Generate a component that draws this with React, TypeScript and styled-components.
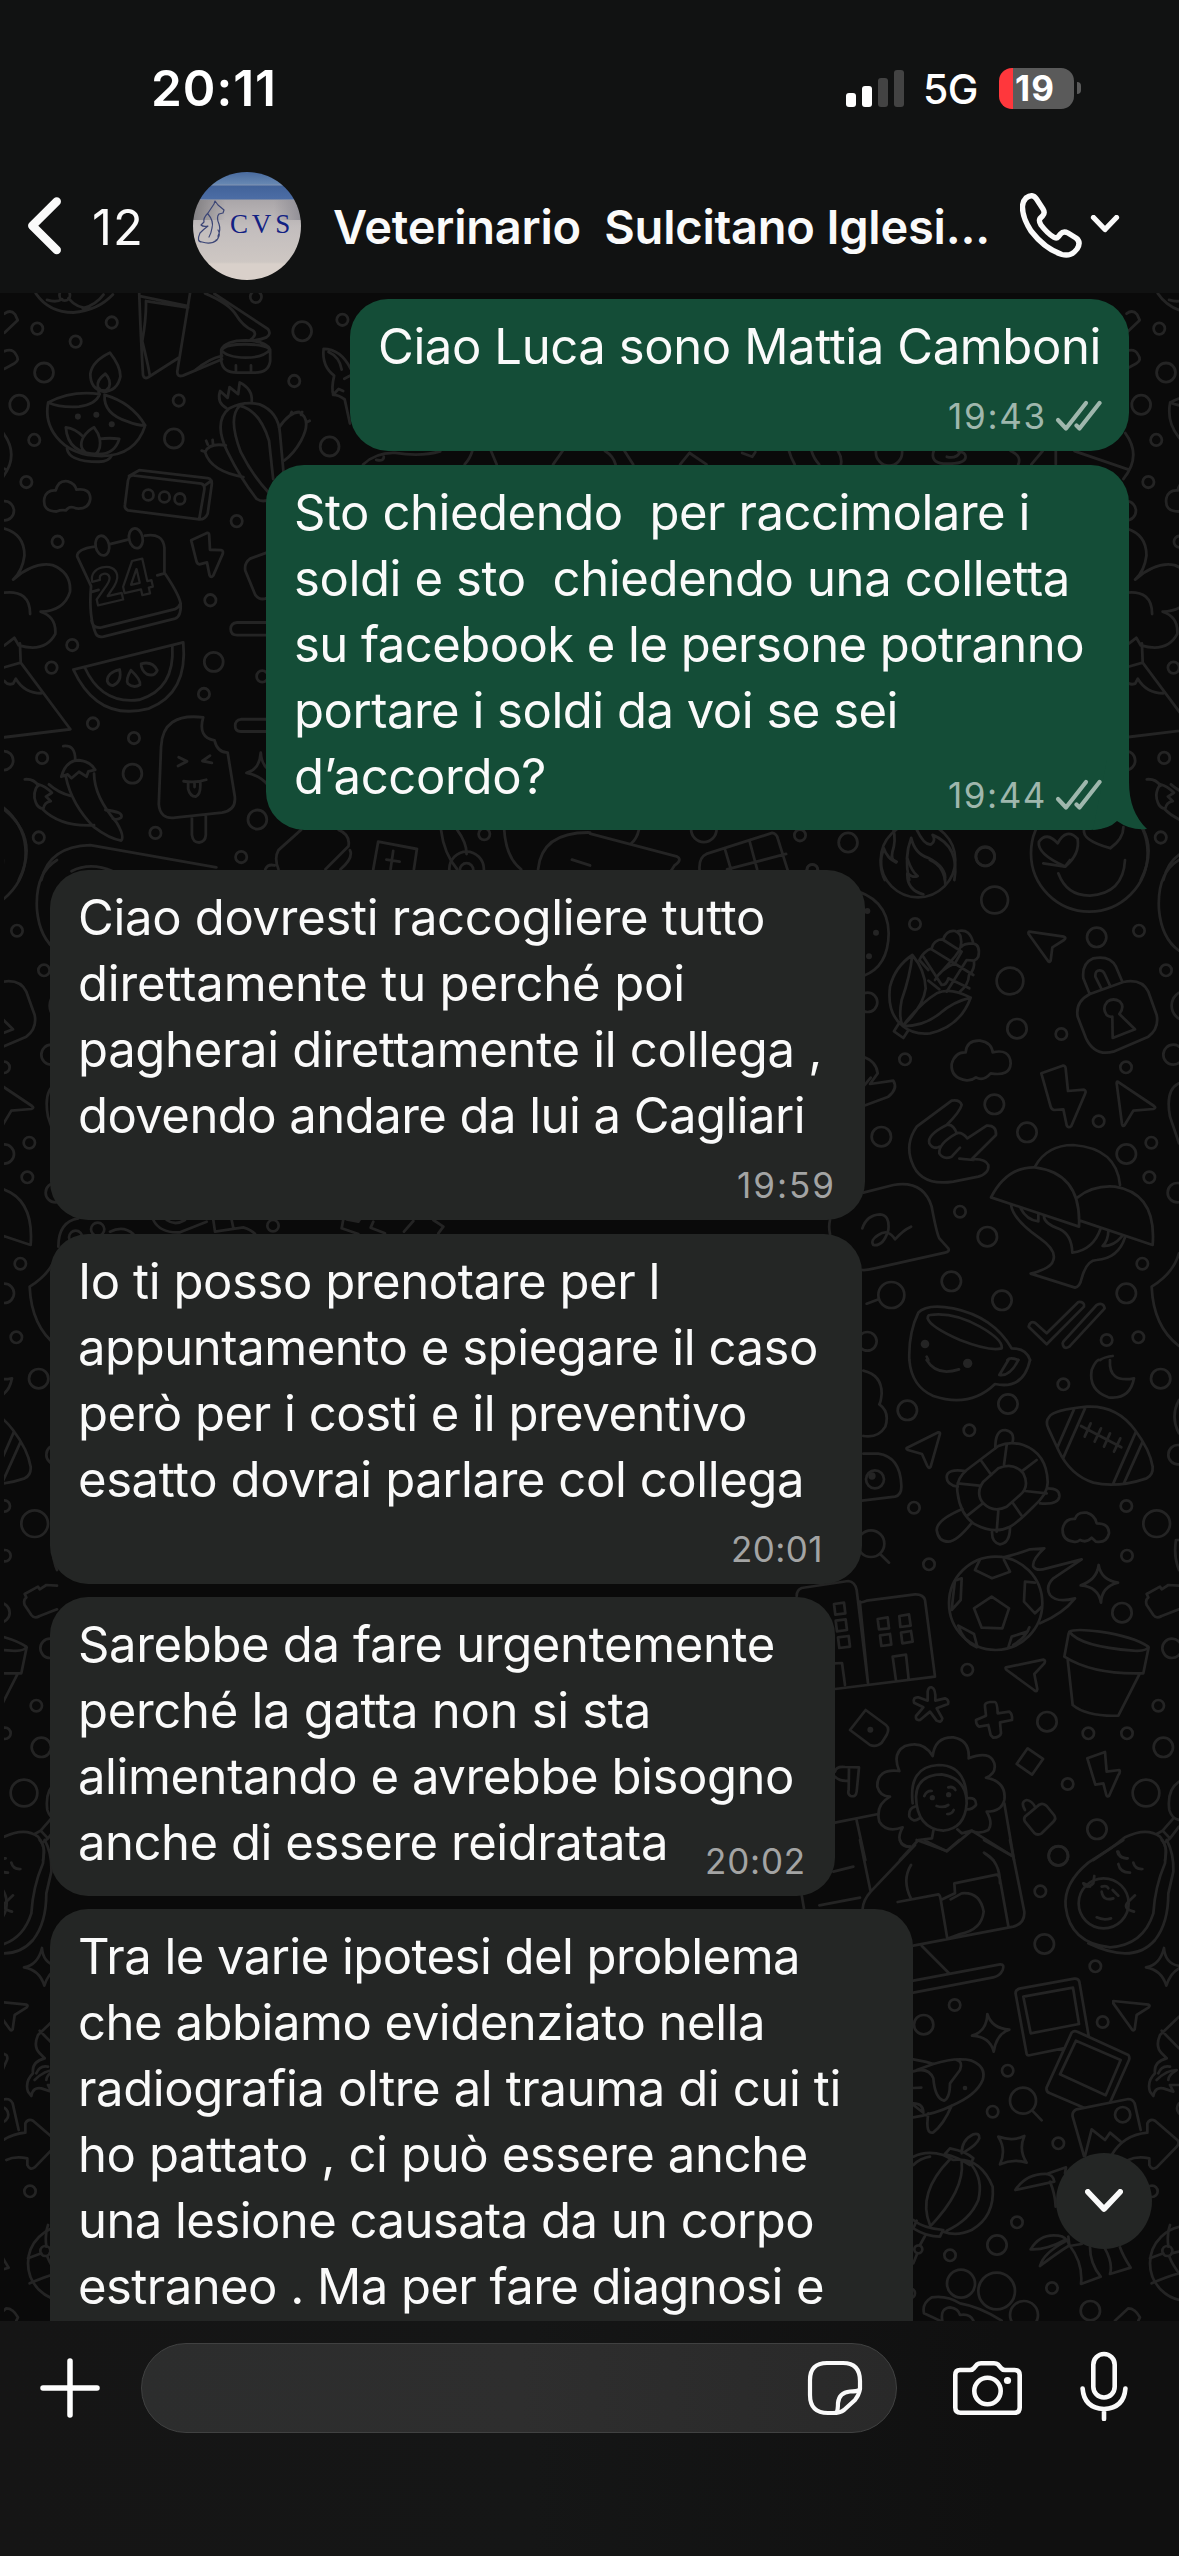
import React, { useLayoutEffect, useRef, useState } from "react";
import styled, { createGlobalStyle } from "styled-components";

const GlobalStyle = createGlobalStyle`
  html, body { margin: 0; padding: 0; background: #0a0a0a; }
  * { box-sizing: border-box; }
`;

const Screen = styled.div`
  width: 1179px;
  height: 2556px;
  display: flex;
  flex-direction: column;
  overflow: hidden;
  background: #0a0a0a;
  color: #fafafa;
  font-family: Inter, "Liberation Sans", sans-serif;
  font-size: 49px;
`;

/* ---------- text that is tracked to fill a given measure ---------- */

const Tracked = styled.span`
  display: inline-block;
  white-space: pre;
`;

function FitText({ width, children }: { width: number; children: string }) {
  const ref = useRef<HTMLSpanElement>(null);
  const [spacing, setSpacing] = useState(0);
  useLayoutEffect(() => {
    const el = ref.current;
    if (!el) return;
    el.style.letterSpacing = "0px";
    const natural = el.getBoundingClientRect().width;
    setSpacing((width - natural) / children.length);
  }, [width, children]);
  return (
    <Tracked ref={ref} style={{ letterSpacing: `${spacing}px` }}>
      {children}
    </Tracked>
  );
}

/* ---------- header ---------- */

const Header = styled.header`
  flex: none;
  height: 293px;
  padding-top: 58px;
  background: #111212;
`;

const StatusRow = styled.div`
  height: 60px;
  padding: 0 98px 0 151px;
  display: flex;
  align-items: center;
  color: #fff;
`;

const Clock = styled.div`
  font-size: 49.5px;
  line-height: 60px;
  font-weight: 600;
  flex: 1;
`;

const SignalBars = styled.div`
  display: flex;
  align-items: flex-end;
  gap: 6px;
  height: 37px;
  margin-right: 19px;
`;

const Bar = styled.i<{ $h: number; $on?: boolean }>`
  width: 10px;
  height: ${(p) => p.$h}px;
  border-radius: 3px;
  background: ${(p) => (p.$on ? "#fff" : "#434343")};
`;

const Network = styled.div`
  font-size: 41px;
  line-height: 50px;
  font-weight: 500;
  width: 76px;
  padding-top: 2px;
`;

const Battery = styled.div`
  width: 75px;
  height: 41px;
  border-radius: 13px;
  background: linear-gradient(90deg, #ff373c 14px, #5a5a5a 14px);
  font-size: 35px;
  line-height: 41px;
  font-weight: 700;
  padding-left: 16px;
`;

const BatteryCap = styled.i`
  width: 4px;
  height: 12px;
  margin-left: 3px;
  border-radius: 0 5px 5px 0;
  background: #5a5a5a;
`;

const NavRow = styled.div`
  margin-top: 54px;
  height: 108px;
  padding-left: 27px;
  display: flex;
  align-items: center;
`;

const Unread = styled.div`
  font-size: 49px;
  width: 101px;
  margin-left: 30px;
  padding-top: 2px;
`;

const Avatar = styled.div`
  width: 108px;
  height: 108px;
  flex: none;
  border-radius: 50%;
  overflow: hidden;
  display: flex;
  background:
    linear-gradient(#496b9f 0, #6687b2 12px, #8193b1 13px, #42639a 14px, #4c6da5 27px, transparent 28px),
    linear-gradient(90deg, #817f82 0, transparent 30%, transparent 75%, #918f96 100%) 0 28px / 100% 20px no-repeat,
    linear-gradient(#a9a5a8 27px, #c2bdbd 55px, #cec7c3 90px, #d9d0ca 92px);
`;

const AvatarMark = styled.svg`
  width: 34px;
  height: 108px;
  flex: none;
`;

const AvatarText = styled.span`
  font-family: "Liberation Serif", serif;
  font-size: 27px;
  line-height: 31px;
  margin-top: 37px;
  margin-left: 3px;
  color: #122183;
`;

const ContactName = styled.h1`
  margin: 0;
  padding-left: 32px;
  width: 719px;
  font-size: 47px;
  font-weight: 600;
`;

/* ---------- conversation ---------- */

const Conversation = styled.main`
  position: relative;
  height: 2028px;
  flex: none;
  overflow: hidden;
  background: #0a0a0a;
`;

const Wallpaper = styled.svg`
  position: absolute;
  left: 0;
  top: 0;
`;

const Thread = styled.div`
  position: relative;
  padding: 6px 50px 0;
  display: flex;
  flex-direction: column;
`;

const Bubble = styled.div<{ $mine?: boolean; $w: number; $gap: number; $open?: boolean }>`
  position: relative;
  flex: none;
  align-self: ${(p) => (p.$mine ? "flex-end" : "flex-start")};
  width: ${(p) => p.$w}px;
  margin-bottom: ${(p) => p.$gap}px;
  padding: 15px 31px ${(p) => (p.$open ? 80 : 17)}px 28px;
  border-radius: 38px;
  background: ${(p) => (p.$mine ? "#144d37" : "#242625")};
  display: flex;
  flex-direction: column;
`;

const Line = styled.div`
  height: 66px;
  line-height: 66px;
  white-space: pre;
`;

const Meta = styled.div<{ $inline?: boolean; $mine?: boolean }>`
  align-self: flex-end;
  display: flex;
  align-items: center;
  gap: ${(p) => (p.$mine ? 8 : 0)}px;
  height: 36px;
  line-height: 36px;
  margin-top: ${(p) => (p.$inline ? -33 : 18)}px;
  margin-right: ${(p) => (p.$mine ? -4 : -2)}px;
  font-size: 35px;
  color: ${(p) => (p.$mine ? "#9fb7ad" : "#a3a4a4")};
`;

const Tail = styled.svg`
  position: absolute;
  right: -18px;
  bottom: 0;
`;

const ScrollDown = styled.button`
  position: absolute;
  left: 1056px;
  top: 1860px;
  width: 96px;
  height: 96px;
  padding: 0;
  border: 0;
  border-radius: 50%;
  background: #242625;
  display: grid;
  place-items: center;
`;

/* ---------- composer ---------- */

const Composer = styled.footer`
  flex: 1;
  padding: 22px 50px 0 40px;
  display: flex;
  align-items: flex-start;
  background: linear-gradient(90deg, #151515, #151616 45%, #101010 85%);
`;

const ComposerIcon = styled.svg<{ $top: number; $left?: number }>`
  flex: none;
  margin-top: ${(p) => p.$top}px;
  margin-left: ${(p) => p.$left ?? 0}px;
`;

const Field = styled.div`
  width: 756px;
  height: 90px;
  margin-left: 41px;
  border: 1px solid #404141;
  border-radius: 45px;
  background: linear-gradient(90deg, #2c2d2d, #2e2e2e 50%, #292929);
  display: flex;
  align-items: center;
  justify-content: flex-end;
  padding-right: 33px;
`;

/* ---------- data ---------- */

type Message = {
  mine?: boolean;
  width: number;
  gap: number;
  lines: [string, number][];
  time?: string;
  timeWidth?: number;
  inline?: boolean;
  tail?: boolean;
};

const MESSAGES: Message[] = [
  {
    mine: true, width: 779, gap: 14, time: "19:43", timeWidth: 99,
    lines: [["Ciao Luca sono Mattia Camboni", 723]],
  },
  {
    mine: true, width: 863, gap: 40, time: "19:44", timeWidth: 99, inline: true, tail: true,
    lines: [
      ["Sto chiedendo  per raccimolare i", 736],
      ["soldi e sto  chiedendo una colletta", 776],
      ["su facebook e le persone potranno", 790],
      ["portare i soldi da voi se sei", 604],
      ["d’accordo?", 252],
    ],
  },
  {
    width: 815, gap: 14, time: "19:59", timeWidth: 99,
    lines: [
      ["Ciao dovresti raccogliere tutto", 687],
      ["direttamente tu perché poi", 607],
      ["pagherai direttamente il collega ,", 744],
      ["dovendo andare da lui a Cagliari", 727],
    ],
  },
  {
    width: 812, gap: 13, time: "20:01 ", timeWidth: 102,
    lines: [
      ["Io ti posso prenotare per l", 582],
      ["appuntamento e spiegare il caso", 740],
      ["però per i costi e il preventivo", 669],
      ["esatto dovrai parlare col collega", 726],
    ],
  },
  {
    width: 785, gap: 13, time: "20:02", timeWidth: 101, inline: true,
    lines: [
      ["Sarebbe da fare urgentemente", 697],
      ["perché la gatta non si sta", 573],
      ["alimentando e avrebbe bisogno", 716],
      ["anche di essere reidratata", 590],
    ],
  },
  {
    width: 863, gap: 0,
    lines: [
      ["Tra le varie ipotesi del problema", 722],
      ["che abbiamo evidenziato nella", 687],
      ["radiografia oltre al trauma di cui ti", 763],
      ["ho pattato , ci può essere anche", 730],
      ["una lesione causata da un corpo", 736],
      ["estraneo . Ma per fare diagnosi e", 746],
    ],
  },
];

/* ---------- wallpaper drawing ---------- */

type Dot = [number, number, number];

const Dots = ({ items }: { items: Dot[] }) => (
  <>
    {items.map(([x, y, r], i) => (
      <circle key={i} cx={x} cy={y} r={r} />
    ))}
  </>
);

const Paths = ({ items }: { items: string[] }) => (
  <>
    {items.map((d, i) => (
      <path key={i} d={d} />
    ))}
  </>
);

const LEFT_DOTS: Dot[] = [
  [99,127,15],[297,111,15],[201,161,15],[680,44,15],[910,104,15],[782,264,15],[475,315,15],[91,418,15],
  [70,528,15],[629,630,15],[153,684,15],[559,837,15],[192,954,15],[137,1013,15],[542,1082,15],[247,1159,15],
  [356,1197,15],[112,1249,15],[413,1445,15],[103,1457,15],[641,1508,15],[697,1036,15],
  [803,134,25],[117,242,25],[51,326,25],[462,414,25],[876,435,25],[568,998,25],[352,1290,25],[684,1410,25],
  [12,603,25],[10,1256,25],[394,562,14],[437,567,14],[478,572,14],[172,40,14],[1287,1448,15],[1240,1540,46],[1240,1542,18],
];

const LEFT_PATHS = [
  "M95,35Q130,85 195,85Q260,80 300,38M125,52Q150,60 165,50M182,48Q205,75 240,74M220,74Q255,65 275,38",
  "M12,88Q28,76 40,90L47,105L12,138M12,186Q33,178 42,194Q54,210 38,218L12,232",
  "M370,35Q374,150 380,248Q383,260 394,254L475,203M505,35L471,240Q471,254 486,250L590,207M388,55Q389,100 378,160Q392,215 398,248M388,55L500,72M372,42L500,68",
  "M545,35Q610,62 628,92Q645,120 672,132Q686,142 664,158M570,36L712,128Q722,140 708,150Q690,158 665,158M520,235Q555,205 590,198",
  "M588,182Q600,158 653,158Q710,160 718,182Q700,203 653,203Q600,202 588,182ZM588,182V212Q592,242 630,242H678Q714,242 718,212V182M590,182Q600,168 653,168Q700,168 716,180M627,223V240M667,223V240",
  "M292,190Q320,225 320,252Q312,290 275,292Q240,285 240,245Q245,212 292,190ZM280,245Q296,262 290,280Q275,300 260,280Q256,262 280,245Z",
  "M265,298Q190,288 128,320Q118,370 150,410Q190,460 270,460Q360,460 386,380Q350,320 278,300M265,298Q255,325 210,331Q160,334 128,320M278,300Q274,350 340,370Q365,380 386,380M262,292Q272,285 282,292",
  "M175,385Q200,388 222,410Q235,392 250,385Q262,400 265,415Q290,412 317,415Q305,455 262,455Q180,455 175,385M222,410Q205,440 235,455M265,415Q270,440 255,455M178,440Q182,475 262,475Q290,475 297,458",
  "M602,335Q575,320 585,290L605,308L610,280L633,298L637,268Q672,285 669,318",
  "M722,570Q700,584 682,572Q640,520 605,450Q565,370 610,335Q650,315 690,325Q740,345 744,400L755,520M636,330Q605,360 640,450Q670,510 718,560M636,328Q690,340 715,420L726,520",
  "M742,385Q770,345 795,345Q830,365 800,420Q780,455 755,472M647,515Q560,500 545,450Q555,425 600,432M775,345L772,352M803,345L800,352M823,368L815,372M536,446L546,449M548,420L552,430M565,418L566,428",
  "M150,605Q112,605 118,570Q124,548 148,550Q155,522 180,526Q200,532 203,548Q240,543 240,572Q236,600 203,597Q185,588 175,602Q162,600 150,605Z",
  "M343,512L370,497L552,518Q566,520 562,540L552,610Q545,628 525,625L340,602Q330,598 332,588L340,525Q342,508 358,511L535,532Q545,535 543,548L530,622M543,538L562,524",
  "M252,697Q205,703 205,722L242,800Q235,880 255,925Q260,935 275,932L465,885Q482,880 480,845Q475,820 437,765V700Q433,660 385,668M292,690L343,678M243,890Q247,912 270,908L465,860Q476,856 480,845M244,815L262,810M418,772L437,767",
  "M508,680L550,661Q556,660 556,668L558,705L588,706Q596,708 590,720L567,772Q561,780 557,772L550,738L530,743Q524,742 522,735Z",
  "M195,1018L487,947Q500,1080 395,1120Q260,1155 195,1018ZM225,1012Q270,1110 370,1097Q465,1070 458,957M285,1048Q285,1025 318,1018Q325,1050 300,1060Q288,1058 285,1048M348,1020Q375,1045 372,1058Q355,1068 340,1055Q333,1045 348,1020M375,1003Q405,995 418,1020Q410,1038 390,1030Q375,1020 375,1003",
  "M540,1143Q432,1130 428,1220L422,1370Q425,1410 465,1405L590,1392Q628,1385 624,1350L605,1235Q578,1235 570,1203Q525,1195 540,1143ZM510,1403V1450Q513,1470 529,1470Q546,1468 547,1450V1400M475,1247L497,1258L473,1270M558,1243L538,1257L563,1262M488,1310Q520,1315 548,1306M500,1312V1330Q505,1350 520,1350Q535,1345 532,1310M517,1315V1325",
  "M12,650Q65,665 65,720Q60,760 35,783Q90,735 140,745Q190,765 186,815Q170,865 108,867Q150,880 147,925Q120,975 50,955L38,935L12,955M12,817Q80,810 80,873M53,950L55,1000L187,1174L12,1195M12,1012L55,1000M12,1048Q20,1060 35,1055L42,1042Q65,1080 110,1080",
  "M168,1218Q200,1213 200,1255M163,1298Q175,1255 210,1255Q240,1258 253,1280L235,1284L230,1298L210,1285L190,1302L180,1292ZM175,1298Q190,1370 250,1430Q290,1460 322,1465Q332,1455 310,1418Q250,1350 250,1290",
  "M66,1305Q90,1303 102,1322M102,1318Q85,1340 95,1365Q100,1380 115,1382Q118,1365 135,1362L122,1350L138,1340Q120,1322 102,1318M112,1382Q160,1430 250,1425M130,1318Q155,1340 188,1348M280,1385Q330,1390 322,1405Q312,1412 300,1408",
  "M12,1385Q105,1460 50,1568M110,1568Q130,1480 240,1477L575,1535M190,1545Q240,1520 300,1545",
  "M707,713L665,728Q648,740 652,760L678,822Q690,838 707,832M720,895H630Q613,897 613,912Q613,928 630,928H720M720,1148H640Q625,1150 625,1165Q625,1180 640,1180H720M712,1278Q695,1265 693,1235Q690,1280 655,1288Q692,1295 712,1320",
  "M930,375L916,312Q900,300 886,300Q880,285 888,250Q855,225 860,180Q905,180 932,232M873,188Q902,200 908,234M885,300L900,285L912,290M915,258L930,250",
  "M965,482Q1000,450 1050,452Q1120,462 1170,448M1000,470Q1020,475 1020,462M1255,447Q1250,465 1235,482M1305,447L1320,482M1495,447L1470,482",
  "M800,1437L740,1490Q728,1510 740,1540M900,1437Q932,1450 926,1480L865,1540M930,1490Q940,1510 905,1540M705,1540Q712,1525 730,1530M1005,1468L1108,1487L1100,1540M1005,1468L992,1540M1045,1492L1038,1540M1027,1515L1062,1520M1172,1437Q1180,1500 1215,1540M1215,1437Q1240,1470 1240,1500M1340,1437Q1345,1510 1385,1540M1430,1540Q1440,1442 1568,1444M1520,1515L1568,1530",
];

const MID_PATHS = [
  "M40,447Q62,460 68,482M92,447L115,482M265,452L240,482M265,452L310,482M405,452L432,462L440,450M530,447Q535,465 545,482M590,447Q595,465 610,482M660,447Q672,465 668,482M915,447Q905,475 940,480Q1000,482 1000,462Q1000,450 980,447M950,462Q975,468 985,450M1120,447Q1150,460 1140,482M1205,447L1175,482M1240,447V482M1290,447L1432,495M1425,400Q1470,460 1420,520",
  "M0,1447L230,1506Q248,1514 225,1530L215,1545M130,1437Q125,1460 110,1472M292,1545Q288,1510 310,1500L485,1445Q497,1447 500,1460L527,1545M360,1490L375,1540M425,1467L445,1540M365,1540L522,1500",
  "M808,1437Q815,1465 805,1495Q800,1515 815,1522Q790,1510 782,1485Q765,1530 785,1568M850,1568Q835,1510 855,1458Q865,1500 900,1510Q950,1535 945,1568M870,1437Q890,1478 908,1475Q922,1465 912,1450Q985,1480 970,1568",
  "M1265,1533Q1190,1500 1195,1468Q1215,1440 1245,1472Q1268,1430 1298,1460Q1305,1500 1265,1533ZM1385,1485Q1310,1465 1315,1437M1385,1485Q1420,1460 1420,1430",
];

const R1_DOTS: Dot[] = [
  [644,120,40],[405,192,17],[950,232,29],[1077,212,17],[1158,331,17],[690,363,40],[711,506,29],[844,522,17],
  [375,598,17],[1038,622,17],[1180,584,30],[643,733,29],[741,817,29],[956,784,17],[1114,848,17],[304,830,29],
  [1039,882,29],[1108,952,17],[1192,998,29],[540,1055,17],[622,1130,29],[1087,1211,17],[514,1264,29],[666,1321,29],
  [1039,1300,29],[334,1305,39],[980,1440,17],[1075,1432,17],[263,427,29],[262,1444,28],[928,-20,175],[414,0,112],[616,-10,28],
  [97,30,17],[1220,437,45],
];
const R1_PATHS = [
  "M835,40Q860,108 930,107Q1030,100 1035,0M330,-5L350,5M382,-5Q395,35 413,48Q400,55 382,40Q380,90 430,103M450,0Q495,20 496,75M790,10L855,20L870,0M200,85Q325,110 326,220Q325,320 250,348",
  "M397,285Q435,330 437,385Q430,440 368,498Q320,460 330,380Q345,320 397,285ZM397,285Q390,350 365,420Q355,470 368,498M368,498Q420,430 470,400Q510,380 572,413Q540,500 450,520Q400,525 368,498ZM572,413Q520,425 480,460Q430,500 368,498M357,490L342,514L370,534L384,512",
  "M418,300Q430,275 455,265Q460,240 490,237Q500,210 525,213Q540,220 542,230M535,213Q570,205 580,250Q602,255 595,290Q590,300 582,302Q585,330 567,345Q565,375 540,395M418,300L445,330M445,362L478,388M430,290L485,375Q500,375 505,355L568,385M455,268L580,345M490,240L545,275L525,310Q480,330 465,360M542,232Q550,260 525,290L480,340M545,260Q550,250 580,250M582,302L560,300L500,395",
  "M748,215L852,230Q860,233 852,240L817,262L812,302Q808,310 802,300L746,222Q744,216 748,215ZM1013,665L1122,738Q1130,744 1120,747L1060,752L1034,795Q1028,802 1026,792L1010,670Q1010,664 1013,665Z",
  "M929,402L910,355Q905,310 940,295Q990,285 1008,320L1026,363M965,388L946,350Q945,330 960,331Q970,332 974,342L990,377M930,402L1030,366Q1085,355 1105,395L1130,465Q1138,505 1105,530L1000,575Q945,590 918,535L893,470Q885,425 930,402ZM997,470L998,534L1065,508L1018,462Q1035,440 1020,425Q1000,412 982,425Q965,445 980,465Q988,472 997,470",
  "M560,661Q512,655 515,612Q525,575 557,577Q560,540 600,542Q635,548 638,577Q690,565 692,610Q690,650 632,640Q610,665 588,652Q575,662 560,661Z",
  "M784,640L848,617Q856,616 857,625L864,693L912,689Q920,692 915,702L874,798Q865,806 860,796L850,748L822,750Q814,748 812,740Z",
  "M545,735Q540,718 515,722L410,800Q375,850 395,905Q420,980 520,965L595,950Q628,940 625,915Q615,895 575,898L648,825Q650,795 620,797L562,835Q545,815 530,820Q520,790 500,795Q440,825 448,850Q460,870 478,860M545,735Q540,755 500,795M530,820Q475,850 478,880Q490,900 515,890L540,863M538,896L580,900",
  "M250,590Q290,605 293,640L270,672L340,662Q355,685 325,710L250,738M272,653L250,680",
  "M765,920Q800,855 880,855Q1010,865 1020,975M633,1012Q680,920 765,922Q905,940 897,1100ZM893,1012Q940,975 1005,980Q1130,1000 1118,1155L900,1082M693,1035Q700,1080 780,1135Q830,1170 820,1200Q815,1225 752,1241L885,1283Q900,1280 905,1255Q920,1200 950,1200Q1015,1195 1035,1132M722,1045Q740,1080 775,1084L775,1062M792,1068Q790,1090 840,1108Q875,1125 877,1178Q940,1170 962,1105M985,1112Q985,1140 968,1158Q1000,1160 1025,1130",
  "M250,998L340,975Q430,960 455,1040Q470,1120 478,1135L505,1165Q510,1175 495,1178L280,1226Q245,1235 230,1225M150,1080Q145,1100 150,1122M247,1105Q260,1065 300,1063Q330,1065 325,1110Q310,1160 280,1155Q270,1140 295,1125Q325,1105 345,1138Q370,1110 393,1100M260,1331L296,1318",
  "M415,1358Q440,1330 520,1345Q640,1370 695,1465Q740,1465 750,1500M415,1358Q385,1420 388,1500M450,1365Q520,1355 600,1400Q670,1440 665,1465Q630,1475 540,1440Q450,1400 443,1375Q443,1365 450,1365M440,1490L445,1500M682,1500Q690,1490 715,1500M960,1500Q975,1490 998,1488",
  "M765,1388Q750,1382 746,1400L800,1453L912,1340Q915,1325 895,1326L800,1420ZM850,1445L950,1335Q970,1325 974,1345L868,1460Q850,1470 848,1450Z",
  "M1197,0Q1130,40 1137,150Q1145,235 1197,272M1197,670Q1155,690 1170,770L1197,850M1197,1180Q1180,1240 1115,1280Q1120,1400 1197,1458",
];

const R2_DOTS: Dot[] = [
  [382,151,29],[684,132,29],[568,211,17],[850,73,17],[1142,56,29],[402,443,17],[447,613,17],[1039,438,17],[1130,491,40],
  [1041,587,17],[1026,758,29],[1176,865,29],[562,929,17],[1135,1037,17],[801,1085,29],[925,1120,17],[1041,1120,17],
  [1150,1162,29],[863,1272,17],[1098,1299,40],[951,1408,29],[835,1487,29],[1194,284,29],[273,551,40],[285,358,27],[647,730,140],
];
const R2_PATHS = [
  "M388,0Q395,80 460,108Q570,145 645,72Q730,90 750,0M440,0Q470,50 537,28M685,0L658,45Q690,50 715,0M250,32Q305,45 305,100Q303,125 298,133Q330,155 316,200Q295,235 250,228",
  "M990,0Q985,70 1062,55Q1050,120 985,112Q925,90 935,30Q945,5 955,0",
  "M808,170Q820,150 920,140Q1010,135 1065,210Q1110,270 1118,320Q1120,345 1100,355Q1010,385 940,368Q870,345 835,270L805,205Q795,185 808,170M882,148L832,262M916,143L850,293M1068,215L1000,370M1088,245L1033,367M903,198L1024,262M932,190L914,230M963,205L944,245M990,220L972,260M1021,235L1002,275",
  "M380,264L475,217Q482,216 479,225L452,320Q447,328 442,318L426,282L384,270Q378,267 380,264ZM250,281H295Q360,290 364,375Q366,405 345,410L246,422M327,608L301,583",
  "M655,258Q690,243 730,255Q800,280 803,365Q805,400 760,440Q710,490 690,500Q640,525 580,490Q540,460 533,400Q525,360 560,330ZM655,325Q700,305 730,340Q750,380 720,405L680,440Q640,460 610,430Q585,400 610,365ZM680,255L672,315M770,300L728,332M800,400L735,393M725,467L697,427M650,515L655,452M563,466L606,432M533,370L598,377M604,303L634,345",
  "M646,265Q645,210 675,210Q705,215 698,245M556,333Q500,325 500,352Q500,375 533,380M803,385Q840,385 838,410Q835,435 780,430M690,502Q690,550 660,553Q635,548 636,515M547,447Q470,480 470,510Q475,545 505,545Q530,545 576,488",
  "M880,545Q845,540 848,505Q855,475 885,477Q890,455 920,458Q945,465 950,490Q988,490 987,520Q980,550 948,545L935,533Q920,550 900,540Q890,548 880,545Z",
  "M635,710L687,745L667,805L605,803L582,745ZM600,598L585,630L636,655L690,635L672,600M545,655L525,662Q520,700 515,750L542,720ZM765,668L735,665L732,725L765,760L785,740M535,797L582,822L592,860M535,797Q550,845 590,862M748,802L742,815L695,830L685,862M748,802Q740,830 700,855M670,592Q720,580 750,568L793,565Q755,600 760,620Q770,635 800,625L905,598L820,655Q795,680 810,705Q830,730 885,715Q850,760 780,790",
  "M956,615Q963,660 1014,668Q965,680 963,728Q955,680 902,676Q950,660 956,615ZM1197,677L1165,675L1145,688L1140,680L1100,702L1105,712Q1095,720 1100,735L1120,765Q1130,778 1145,768L1197,748",
  "M50,708Q50,690 65,684L205,663Q225,665 230,690L264,970M240,725Q240,730 260,722L405,703Q430,702 435,720L465,950L165,987M240,730L264,970M164,910L186,909L195,975M338,890L378,884L386,958M338,890L348,962M162,732L192,728L196,760L166,764ZM167,782L197,778L201,810L171,814ZM174,832L206,828L210,860L178,864ZM293,777L323,772L327,805L297,808ZM358,768L387,763L392,797L361,801ZM300,826L330,822L334,854L304,858ZM363,818L393,813L398,845L367,850Z",
  "M868,815Q885,805 960,815Q1060,830 1105,860Q1100,875 1060,872Q900,860 868,815ZM866,820L853,890Q940,945 1090,940L1106,862M863,898L878,1035Q920,1070 1015,1067L1078,943",
  "M678,922L790,899Q798,900 793,910L763,942L772,988Q770,998 762,990L680,930Q675,925 678,922Z",
  "M443,995Q445,980 455,982Q468,985 466,1022L495,1015Q508,1020 504,1032L470,1045L487,1075Q485,1090 470,1082L450,1055L420,1080Q405,1082 408,1068L430,1042L402,1028Q398,1010 415,1012L443,1022Z",
  "M615,1040Q612,1028 630,1026L645,1026Q652,1028 653,1060L688,1055Q698,1062 696,1080L660,1087L663,1120Q660,1132 640,1133L632,1125L625,1095L598,1100Q588,1095 588,1080L618,1067Z",
  "M257,1050L210,1110L270,1155Q290,1162 305,1148L320,1125Q330,1105 318,1095ZM743,1165L789,1197L756,1244L710,1212ZM922,1195L975,1176L980,1235L1018,1230Q1022,1235 1015,1245L987,1308Q982,1312 979,1305L970,1270L946,1274Z",
  "M735,1350Q720,1325 740,1320Q755,1322 765,1340M735,1370L778,1334Q790,1328 800,1338L822,1365Q830,1375 820,1385L785,1420Q772,1428 762,1418L735,1385Q730,1377 735,1370Z",
  "M165,1235Q168,1218 195,1221L237,1222L230,1295Q228,1312 212,1308Q202,1303 206,1290L207,1222M165,1250Q180,1265 206,1262M165,1388L295,1362M230,1382L256,1500",
  "M358,1233Q335,1180 375,1158Q430,1140 458,1188Q465,1130 520,1132Q570,1140 566,1195Q630,1170 643,1210Q650,1240 618,1253Q680,1265 673,1320Q665,1355 620,1355Q640,1390 625,1410Q595,1425 575,1412M358,1233Q290,1225 292,1280Q300,1310 330,1310Q285,1335 298,1385Q320,1420 368,1402Q350,1435 365,1450Q380,1462 390,1460M398,1330Q385,1220 475,1215Q555,1215 560,1310",
  "M408,1310Q410,1245 485,1243Q560,1255 560,1330Q555,1405 490,1412Q410,1405 408,1310ZM405,1340Q385,1345 388,1370Q400,1390 418,1375M560,1315Q590,1310 588,1335Q575,1350 560,1348M433,1308Q440,1292 455,1293M505,1282Q520,1278 526,1290M470,1338Q490,1345 505,1335M502,1362Q515,1363 521,1350M460,1412L456,1435L415,1440L360,1500M532,1408L545,1420L575,1412L500,1474L435,1442M575,1412L700,1490M673,1330L702,1500M612,1478L640,1500",
  "M940,1500Q990,1470 1035,1432Q1100,1400 1140,1430Q1165,1460 1155,1500M1130,1422L1148,1412L1170,1435L1158,1445M1148,1412L1180,1375M1170,1435L1197,1400M1197,1265Q1160,1290 1168,1350Q1175,1375 1197,1380M1015,1475Q1020,1495 1040,1495M1197,120Q1170,170 1197,220M1197,540H1188Q1180,590 1197,630",
];

const R3_DOTS: Dot[] = [
  [835,48,29],[781,154,17],[793,312,29],[946,379,17],[524,495,17],[431,554,29],[968,546,17],[683,692,17],[638,815,17],
  [729,782,39],[835,910,17],[1028,824,23],[711,1147,17],[651,1215,29],[510,1246,17],[816,1344,17],[543,1331,42],[650,1353,55],
  [732,1425,42],[931,1412,29],[1116,1054,17],[415,1228,12],[971,190,75],[1162,1233,15],[390,1360,15],[1222,1270,112],
];
const R3_PATHS = [
  "M240,0L272,155L405,15M360,0Q365,22 390,20M410,0L500,33L538,0M612,0L697,48M690,0L733,215Q735,250 700,260L400,317M615,40Q660,65 660,130M272,155Q250,180 248,206M160,95L220,80M118,196L240,173M65,165L72,206M393,75Q365,120 393,176M353,186L475,163Q480,165 482,178L502,296M487,178L525,160L523,130L650,104Q660,107 662,130L685,258M512,178L545,160Q600,155 611,215Q605,270 540,282L502,296",
  "M400,422L660,373Q675,372 668,390Q660,408 640,412L400,458M425,317L507,400",
  "M1030,0L925,68Q850,130 857,200Q870,310 990,322Q1090,315 1120,220Q1125,140 1155,70L1158,30Q1155,10 1145,0M925,310Q1060,375 1125,300Q1165,250 1165,160L1180,95Q1182,40 1160,0M1012,35Q1015,55 1043,55M1015,72Q1020,98 1050,98M1060,68Q1065,88 1087,87M910,130Q920,150 940,130L943,108M930,140L912,130M1065,166L1045,185Q1025,205 1062,215M965,155Q970,185 1000,175M965,140Q980,135 985,145M998,150L1015,167M950,232Q970,242 993,235",
  "M622,522Q635,565 688,569Q650,580 641,635Q630,590 576,587Q620,575 622,522ZM1152,324Q1155,370 1197,378M1152,324Q1140,375 1098,382Q1145,390 1159,437Q1170,400 1197,385",
  "M740,642L707,462Q705,450 718,446L883,416Q895,415 898,425L926,588M740,642Q742,648 752,645L850,625M730,470L879,443L897,552L752,580ZM875,578Q882,570 892,575L1045,645Q1050,652 1047,660L990,788M875,578L800,742Q797,755 810,760L912,803M888,602L1022,660L977,766L840,703Z",
  "M1000,483L1106,494Q1112,497 1105,503L1070,525L1064,568Q1060,575 1055,567L1000,490ZM912,948L878,830Q875,815 890,808L1045,777Q1058,777 1064,790L1082,870M915,948L935,868L975,900L990,878L1022,905M757,812L785,841",
  "M400,658Q440,665 460,672Q530,650 575,662Q620,680 608,720Q590,765 515,797Q470,820 400,832M400,694Q445,680 460,715Q465,775 492,782Q510,775 510,730L540,690Q550,665 530,660M445,820Q435,885 460,877Q490,855 515,797M400,744L424,743M400,790Q430,790 430,818L400,795M460,672L410,690",
  "M655,890Q700,905 733,888Q715,930 740,968Q700,955 660,973Q680,930 655,890Z",
  "M400,950Q440,930 490,945L520,960Q600,950 638,1040Q645,1130 575,1170Q530,1190 490,1175M495,942L510,925Q560,935 580,955L570,975Q530,950 495,942M545,940Q545,900 580,883Q600,878 598,895Q590,915 555,935M400,975Q420,955 450,950M400,1140Q430,1165 490,1170M410,1142L400,1165Q440,1190 480,1190L488,1172M510,958Q410,1060 450,1155M545,965Q555,1050 450,1160M575,975Q610,1020 595,1080Q570,1140 500,1172M435,1188L420,1215M412,1240L400,1270",
  "M706,1050Q740,1000 800,1002Q820,1005 823,1025ZM800,1002L858,982L855,1000M810,1025Q825,1060 827,1100M752,1228Q780,1180 835,1187Q860,1190 868,1215Q910,1270 903,1332L962,1310Q930,1270 930,1220M752,1228Q800,1230 855,1200M780,1278Q790,1240 855,1205M780,1278Q830,1240 865,1218M868,1218L905,1212M865,1190L868,1215M973,1222Q1000,1270 990,1302L1052,1283Q1030,1250 1020,1222",
  "M995,945Q1030,885 1102,878V850Q1110,835 1125,842L1192,900Q1200,910 1190,920L1130,982Q1115,992 1108,975V955Q1070,948 1045,960M1197,530L1140,585Q1125,620 1145,640L1160,655M1145,572L1197,625M1160,655Q1120,665 1125,700Q1100,725 1110,755L1120,768Q1125,740 1150,745L1180,755L1170,735L1197,735M1135,700Q1145,675 1170,680M1130,720Q1160,690 1190,690Q1165,705 1165,720M1197,790Q1185,805 1197,820",
  "M1165,1220Q1160,1180 1170,1155M1110,1255L1150,1240M1175,1240L1197,1235M1168,1250Q1175,1270 1197,1300M1115,1330Q1160,1310 1197,1300M480,1442L432,1420Q425,1390 455,1372Q500,1365 540,1390Q600,1400 665,1442M487,1442Q480,1405 510,1402Q535,1405 540,1425Q570,1420 580,1442M1005,1442L1045,1405Q1065,1405 1080,1432L1075,1442",
];

const GAP_PATHS = [
  "M175,1160Q175,1085 235,1075M330,1115Q370,1095 400,1122M460,1080Q480,1120 540,1117L620,1085M640,1080L645,1115L730,1102Q755,1110 765,1122M695,1080L700,1104M500,1080Q525,1098 555,1080M1030,1078L1025,1105L1075,1122M1120,1085L1112,1103L1155,1120M1240,1083L1212,1115M1300,1080L1330,1100L1315,1120M1040,1078L1075,1085L1080,1078",
];

function ChatWallpaper() {
  return (
    <Wallpaper width="1179" height="2028" viewBox="0 293 1179 2028" aria-hidden>
      <defs>
        <clipPath id="tile-edge">
          <rect x="4" y="293" width="1175" height="2028" />
        </clipPath>
        <g id="doodles" fill="none" stroke="#242424" strokeLinecap="round" strokeLinejoin="round">
          <g transform="translate(0 280) scale(.37628 .38265)" strokeWidth="7.4">
            <Dots items={LEFT_DOTS} />
            <Paths items={LEFT_PATHS} />
            <g fill="#242424" stroke="none">
              <Dots items={[[207, 357, 8], [256, 352, 8], [297, 377, 8]]} />
            </g>
            <ellipse cx="272" cy="694" rx="18" ry="26" transform="rotate(-12 272 694)" />
            <ellipse cx="361" cy="675" rx="18" ry="26" transform="rotate(-12 361 675)" />
            <text
              x="254" y="852" transform="rotate(-13 254 852)" fontFamily="Inter, sans-serif"
              fontWeight="800" fontSize="128" letterSpacing="-3" strokeWidth="6"
            >
              24
            </text>
          </g>
          <g transform="translate(590 280) scale(.37564 .38265)" strokeWidth="7.4">
            <Dots items={[[303, 1435, 34], [559, 1451, 15], [687, 1470, 25], [1052, 1506, 25], [592, 1542, 14], [796, 450, 35]]} />
            <Paths items={MID_PATHS} />
          </g>
          <g transform="translate(780 860) scale(.33333)" strokeWidth="8.2">
            <Dots items={R1_DOTS} />
            <Paths items={R1_PATHS} />
            <g fill="#242424" stroke="none">
              <Dots items={[[262, 153, 9], [288, 218, 9], [267, 289, 9], [435, 1452, 13]]} />
            </g>
          </g>
          <g transform="translate(780 1360) scale(.33333)" strokeWidth="8.2">
            <Dots items={R2_DOTS} />
            <Paths items={R2_PATHS} />
            <g fill="#242424" stroke="none">
              <Dots items={[[563, 10, 14], [271, 1109, 9], [457, 1313, 8], [506, 1304, 8], [276, 348, 11]]} />
            </g>
          </g>
          <g transform="translate(780 1840) scale(.33333)" strokeWidth="8.2">
            <Dots items={R3_DOTS} />
            <Paths items={R3_PATHS} />
            <circle cx="555" cy="744" r="7" fill="#242424" stroke="none" />
          </g>
          <g transform="translate(0 860) scale(.33333)" strokeWidth="8.2">
            <Dots items={[[293, 1108, 20], [227, 1132, 20], [819, 1097, 17]]} />
            <Paths items={GAP_PATHS} />
          </g>
        </g>
      </defs>
      <g clipPath="url(#tile-edge)">
        <use href="#doodles" />
        <use href="#doodles" x="-1122" />
        <use href="#doodles" x="1122" />
      </g>
    </Wallpaper>
  );
}

/* ---------- small drawings ---------- */

const DoubleCheck = () => (
  <svg width="47" height="32" viewBox="0 0 47 32" fill="none" stroke="#9fb7ad" strokeWidth="4.2" strokeLinecap="round" strokeLinejoin="round">
    <path d="M3 20L11 28.5L31 3" />
    <path d="M21.5 25.5L24.5 28.5L44.5 3" />
  </svg>
);

const CallChevron = styled.svg`
  margin-left: 7px;
`;

const DownChevron = ({ w, h, s }: { w: number; h: number; s: number }) => (
  <svg width={w} height={h} viewBox={`0 0 ${w} ${h}`} fill="none" stroke="#fafafa" strokeWidth={s} strokeLinecap="round" strokeLinejoin="round">
    <path d={`M${s / 2} ${s / 2}L${w / 2} ${h - s / 1.4}L${w - s / 2} ${s / 2}`} />
  </svg>
);

export default function App() {
  return (
    <Screen>
      <GlobalStyle />
      <Header>
        <StatusRow>
          <Clock><FitText width={126}>20:11</FitText></Clock>
          <SignalBars>
            <Bar $h={14} $on />
            <Bar $h={21} $on />
            <Bar $h={29} />
            <Bar $h={37} />
          </SignalBars>
          <Network><FitText width={55}>5G</FitText></Network>
          <Battery><FitText width={40}>19</FitText></Battery>
          <BatteryCap />
        </StatusRow>
        <NavRow>
          <svg width="35" height="60" viewBox="27 197 35 60" fill="none" stroke="#fafafa" strokeWidth="8.5" strokeLinecap="round" strokeLinejoin="round">
            <path d="M56.7 202.5L32.3 226.7L56.7 251" />
          </svg>
          <Unread><FitText width={52}>12</FitText></Unread>
          <Avatar>
            <AvatarMark viewBox="0 0 34 108" fill="none" stroke="#3c4676" strokeWidth="1.2" strokeLinecap="round" strokeLinejoin="round">
              <path d="M15 41L21 32L22 29L25 33L31 38L30 41L26 42Q23 45 26 52Q28 58 25 64M15 41Q10 46 11 50L8 53Q10 55 15 54Q11 57 7 61Q3 70 9 70Q18 73 24 68Q28 62 25 58M15 42Q21 49 19 56Q18 62 16 65M25 64Q26 67 23 68" />
            </AvatarMark>
            <AvatarText><FitText width={64}>CVS</FitText></AvatarText>
          </Avatar>
          <ContactName><FitText width={657}>Veterinario  Sulcitano Iglesi...</FitText></ContactName>
          <svg width="63" height="68" viewBox="1020 192 63 68" fill="none" stroke="#fafafa" strokeWidth="5.4" strokeLinejoin="round">
            <path d="M1026 198Q1032.500 193 1036.500 199L1043 209Q1045.500 213 1042.500 216L1040 218.500Q1038.500 221 1041 225Q1047 233 1053.500 237Q1056.500 239 1058.500 236.500L1060.500 234Q1063.500 230.500 1068 233L1076 238Q1081.500 242 1077 249Q1071 257 1062 254.500Q1045 249 1031 231Q1022 217 1022.500 206Q1023 201 1026 198Z" />
          </svg>
          <CallChevron width="30" height="22" viewBox="0 0 30 22" fill="none" stroke="#fafafa" strokeWidth="5.2" strokeLinecap="round" strokeLinejoin="round">
            <path d="M3.500 1.500L15 13.500L26.500 1.500" transform="translate(0 1)" />
          </CallChevron>
        </NavRow>
      </Header>

      <Conversation>
        <ChatWallpaper />
        <Thread>
          {MESSAGES.map((m, i) => (
            <Bubble key={i} $mine={m.mine} $w={m.width} $gap={m.gap} $open={!m.time}>
              {m.lines.map(([text, w]) => (
                <Line key={text}><FitText width={w}>{text}</FitText></Line>
              ))}
              {m.time && (
                <Meta $inline={m.inline} $mine={m.mine}>
                  <FitText width={m.timeWidth ?? 99}>{m.time}</FitText>
                  {m.mine && <DoubleCheck />}
                </Meta>
              )}
              {m.tail && (
                <Tail width="60" height="70" viewBox="0 0 60 70">
                  <path d="M20 0H42V22Q42 52 60 69Q44 71 30 61Q22 69 6 70Z" fill="#144d37" />
                </Tail>
              )}
            </Bubble>
          ))}
        </Thread>
        <ScrollDown aria-label="Scroll down">
          <DownChevron w={38} h={24} s={5.6} />
        </ScrollDown>
      </Conversation>

      <Composer>
        <ComposerIcon $top={14} width="60" height="62" viewBox="0 0 60 62" stroke="#fff" strokeWidth="5.5" strokeLinecap="round">
          <path d="M30 4V58M3 31H57" />
        </ComposerIcon>
        <Field>
          <svg width="56" height="56" viewBox="0 0 56 56" fill="none" stroke="#fafafa" strokeWidth="4.2" strokeLinejoin="round">
            <path d="M20 3H36Q53 3 53 21V29Q52 35 48 40L37 50Q33 53 26 53H21Q3 53 3 35V20Q3 3 20 3Z" />
            <path d="M52 30Q50 31.500 43 31.500Q32 32.500 31 43Q31 50 29.500 53" />
          </svg>
        </Field>
        <ComposerIcon $top={17} $left={55} width="71" height="58" viewBox="0 0 71 58" fill="none" stroke="#fafafa" strokeWidth="4.6" strokeLinejoin="round">
          <path d="M8 10H18Q20.500 10 22 8L25 4.600Q26.500 3.300 29 3.300H42Q44.500 3.300 46 4.600L49 8Q50.500 10 53 10H62.500Q67.700 10 67.700 15V47.500Q67.700 52.700 62.500 52.700H8.500Q3.300 52.700 3.300 47.500V15Q3.300 10 8 10Z" />
          <circle cx="35.500" cy="31" r="13.200" />
          <circle cx="55.500" cy="20.500" r="3.600" fill="#fafafa" stroke="none" />
        </ComposerIcon>
        <ComposerIcon $top={8} $left={57} width="48" height="70" viewBox="0 0 48 70" fill="none" stroke="#fafafa" strokeWidth="4.600" strokeLinecap="round">
          <rect x="13.300" y="3" width="21.400" height="43.500" rx="10.700" />
          <path d="M2.600 37.500Q4 57 24 58Q44 57 45.400 37.500M24 58V68" />
        </ComposerIcon>
      </Composer>
    </Screen>
  );
}
